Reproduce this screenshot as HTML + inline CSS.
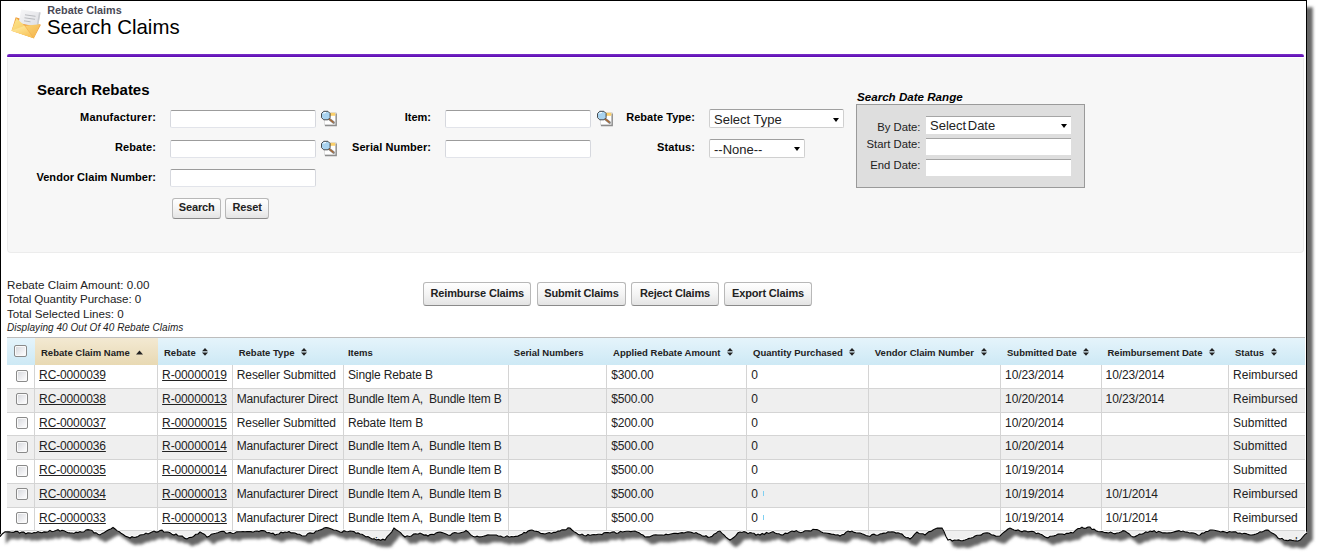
<!DOCTYPE html>
<html><head><meta charset="utf-8">
<style>
*{box-sizing:border-box}
html,body{margin:0;padding:0;width:1321px;height:558px;overflow:hidden;background:#fff;font-family:"Liberation Sans",sans-serif;color:#000}
.a{position:absolute;white-space:nowrap}
.lbl{font-size:11px;font-weight:bold;color:#000;text-align:right;line-height:13px}
.inp{position:absolute;background:#fff;border:1px solid #d6d8de;border-top-color:#9c9c9c;border-bottom-color:#e2e4ea;border-radius:2px}
.sel{position:absolute;background:#fff;border:1px solid #d0d0d0;border-top-color:#a0a0a0;border-radius:2px;color:#222}
.arr{position:absolute;width:0;height:0;border-left:3.5px solid transparent;border-right:3.5px solid transparent;border-top:4px solid #000}
.btn{position:absolute;height:21px;border:1px solid #b8b8b8;border-bottom-color:#8a8a8a;border-radius:3px;background:linear-gradient(#fff,#f4f4f4 50%,#e4e4e4);font-size:11px;font-weight:bold;color:#222;text-align:center;line-height:18px;letter-spacing:-0.15px}
.cb{position:absolute;width:12.5px;height:12px;border:1px solid #8a8a8a;border-radius:2px;background:linear-gradient(135deg,#d4d6db,#f4f4f6 70%,#fff);box-shadow:inset 0 0 0 1px #fafafa}
.th{font-size:9.5px;font-weight:bold;color:#222;line-height:12px;letter-spacing:0px}
.si{position:relative;margin-left:6.5px;top:-1px}
.si2{position:relative;margin-left:6.5px;top:0px}
.sup{display:inline-block;margin-left:7px;width:0;height:0;border-left:4px solid transparent;border-right:4px solid transparent;border-bottom:5px solid #222;vertical-align:1px}
.sboth{display:inline-block;margin-left:7px;width:8px;height:9px;vertical-align:-1px;background:linear-gradient(#222,#222) no-repeat;position:relative}
.td{font-size:12px;color:#222;line-height:14px;letter-spacing:-0.13px}
.lnk{text-decoration:underline}

</style></head><body>
<svg class="a" style="left:0;top:0" width="1321" height="558" viewBox="0 0 1321 558">
<defs><filter id="sh" x="-2%" y="-2%" width="104%" height="104%"><feGaussianBlur stdDeviation="1.5"/></filter></defs>
<path d="M0.0 0.0 L1307.0 0.0 L1307.0 533.0 L1304.8 534.6 L1302.5 537.4 L1300.2 540.0 L1298.0 541.0 L1296.0 541.0 L1294.0 540.7 L1292.0 540.4 L1290.0 539.9 L1288.0 540.8 L1286.0 540.4 L1284.0 540.1 L1282.0 538.3 L1280.0 539.0 L1278.0 538.1 L1276.0 535.5 L1274.0 533.9 L1272.0 533.1 L1270.0 531.6 L1268.0 530.0 L1266.0 530.1 L1264.0 531.1 L1262.0 532.0 L1260.0 531.8 L1258.0 533.2 L1256.0 534.0 L1254.0 534.6 L1252.0 535.0 L1250.0 535.0 L1248.0 534.4 L1246.0 533.6 L1244.0 533.2 L1242.0 533.9 L1240.0 533.0 L1237.9 533.4 L1235.7 531.9 L1233.6 531.8 L1231.4 532.0 L1229.3 531.5 L1227.1 532.8 L1225.0 532.0 L1222.9 531.4 L1220.7 532.0 L1218.6 531.2 L1216.4 530.7 L1214.3 530.2 L1212.1 530.0 L1210.0 530.0 L1208.0 531.5 L1206.0 531.5 L1204.0 533.0 L1202.0 533.1 L1200.0 535.0 L1197.9 535.2 L1195.8 533.8 L1193.6 533.0 L1191.5 532.7 L1189.4 533.0 L1187.2 532.1 L1185.1 532.0 L1183.0 531.0 L1181.0 531.7 L1179.0 530.6 L1177.0 531.1 L1175.0 531.6 L1173.0 532.2 L1171.0 532.8 L1169.0 532.9 L1167.0 533.0 L1164.9 532.9 L1162.8 532.9 L1160.6 531.9 L1158.5 531.3 L1156.4 532.6 L1154.2 530.7 L1152.1 531.6 L1150.0 531.0 L1147.9 532.5 L1145.8 531.9 L1143.6 533.5 L1141.5 534.3 L1139.4 534.1 L1137.2 535.6 L1135.1 536.6 L1133.0 537.0 L1131.0 535.9 L1129.0 533.7 L1127.0 532.5 L1125.0 531.0 L1123.0 530.7 L1121.0 532.1 L1119.0 532.8 L1117.0 533.0 L1114.9 533.8 L1112.8 533.2 L1110.6 532.1 L1108.5 533.0 L1106.4 532.6 L1104.2 532.5 L1102.1 531.5 L1100.0 531.8 L1098.0 531.5 L1096.0 530.7 L1094.0 529.1 L1092.0 529.5 L1090.0 527.0 L1088.0 527.0 L1086.0 528.1 L1084.0 528.4 L1082.0 527.1 L1080.0 528.5 L1078.0 528.5 L1075.5 530.3 L1073.0 533.0 L1070.8 532.4 L1068.7 533.4 L1066.5 533.3 L1064.3 534.6 L1062.2 534.0 L1060.0 534.0 L1058.0 534.1 L1056.0 535.3 L1054.0 535.9 L1052.0 536.3 L1050.0 536.3 L1048.0 538.0 L1046.0 537.4 L1044.0 536.2 L1042.0 534.7 L1040.0 534.0 L1038.0 533.1 L1036.0 533.7 L1034.0 531.7 L1032.0 531.2 L1030.0 531.5 L1028.0 531.9 L1026.0 531.1 L1024.0 530.8 L1022.0 531.8 L1020.0 531.0 L1018.0 529.9 L1016.0 530.6 L1014.0 529.9 L1012.0 529.0 L1010.0 528.0 L1008.0 529.0 L1006.0 530.7 L1004.0 532.2 L1002.0 533.9 L1000.0 536.0 L997.9 536.3 L995.7 536.1 L993.6 535.1 L991.4 534.7 L989.3 533.3 L987.1 532.9 L985.0 533.0 L983.0 533.5 L981.0 535.1 L979.0 535.3 L977.0 535.2 L975.0 536.0 L973.0 537.5 L971.0 538.0 L969.0 538.4 L967.0 539.3 L965.0 540.0 L962.9 540.6 L960.8 540.7 L958.6 539.9 L956.5 540.2 L954.4 540.0 L952.2 541.0 L950.1 539.3 L948.0 540.0 L946.0 536.5 L944.0 531.6 L942.0 528.0 L939.7 528.1 L937.3 528.0 L935.0 529.0 L933.0 530.0 L931.0 531.4 L929.0 531.6 L927.0 533.2 L925.0 535.0 L923.0 533.8 L921.0 533.7 L919.0 533.5 L917.0 532.0 L914.7 534.2 L912.3 537.1 L910.0 539.0 L908.0 537.5 L906.0 537.7 L904.0 536.1 L902.0 534.1 L900.0 533.5 L898.0 532.8 L896.0 533.1 L894.0 532.0 L892.0 531.8 L890.0 532.0 L888.0 531.8 L886.0 533.2 L884.0 533.1 L882.0 533.6 L880.0 534.0 L878.0 535.2 L876.0 535.2 L874.0 534.2 L872.0 534.6 L870.0 536.5 L868.0 536.0 L866.0 535.5 L864.0 534.5 L862.0 533.8 L860.0 533.0 L858.0 533.0 L856.0 532.8 L854.0 532.4 L852.0 531.0 L850.0 531.8 L848.0 531.0 L846.0 532.1 L844.0 534.4 L842.0 534.8 L840.0 536.0 L837.9 534.7 L835.7 535.0 L833.6 534.4 L831.4 534.1 L829.3 533.6 L827.1 533.2 L825.0 533.0 L823.0 532.8 L821.0 531.8 L819.0 530.4 L817.0 529.6 L815.0 529.5 L813.0 529.4 L811.0 531.0 L809.0 530.9 L807.0 530.8 L805.0 530.7 L803.0 532.0 L800.8 532.7 L798.6 532.1 L796.4 530.6 L794.2 531.6 L792.0 531.0 L789.8 532.0 L787.5 533.5 L785.2 533.1 L783.0 535.0 L781.0 534.9 L779.0 533.8 L777.0 533.8 L775.0 532.9 L773.0 531.5 L770.8 532.4 L768.7 533.4 L766.5 532.5 L764.3 534.5 L762.2 533.5 L760.0 535.0 L758.0 534.1 L756.0 535.2 L754.0 533.3 L752.0 533.0 L750.0 532.6 L748.0 533.7 L746.0 532.2 L744.0 531.6 L742.0 532.5 L740.0 532.0 L738.0 532.8 L736.0 535.3 L734.0 537.3 L732.0 538.7 L730.0 540.0 L728.0 538.8 L726.0 537.2 L724.0 534.9 L722.0 533.4 L720.0 531.0 L718.0 531.4 L716.0 533.3 L714.0 534.1 L712.0 536.4 L710.0 537.0 L708.0 537.3 L706.0 535.7 L704.0 536.4 L702.0 535.8 L700.0 534.4 L698.0 533.8 L696.0 532.6 L694.0 533.4 L692.0 532.6 L690.0 532.0 L688.0 531.7 L686.0 532.3 L684.0 533.0 L682.0 532.6 L680.0 533.0 L678.0 533.6 L676.0 533.4 L674.0 533.3 L672.0 533.7 L670.0 534.2 L668.0 534.8 L666.0 534.2 L664.0 535.2 L662.0 535.0 L660.0 535.0 L657.9 535.0 L655.7 534.9 L653.6 535.0 L651.4 535.9 L649.3 536.9 L647.1 536.8 L645.0 537.0 L643.0 535.0 L641.0 534.3 L639.0 532.8 L637.0 531.9 L635.0 531.0 L632.9 531.3 L630.8 531.6 L628.8 531.2 L626.7 531.3 L624.6 531.5 L622.5 532.0 L620.4 531.3 L618.3 533.0 L616.2 533.4 L614.2 531.8 L612.1 532.1 L610.0 533.0 L608.0 532.5 L606.0 532.6 L604.0 532.8 L602.0 534.6 L600.0 534.2 L598.0 534.3 L596.0 534.8 L594.0 534.5 L592.0 534.8 L590.0 535.5 L588.0 534.5 L586.0 536.0 L584.0 535.5 L582.0 534.1 L580.0 535.0 L578.0 534.2 L576.0 532.8 L574.0 531.6 L572.0 530.0 L570.0 528.0 L568.0 527.9 L566.0 529.8 L564.0 529.9 L562.0 529.8 L560.0 531.0 L557.9 531.1 L555.7 532.4 L553.6 532.2 L551.4 533.4 L549.3 532.6 L547.1 533.3 L545.0 534.0 L542.8 533.6 L540.7 533.5 L538.5 531.8 L536.3 531.4 L534.2 531.0 L532.0 530.0 L530.0 530.4 L528.0 531.0 L526.0 533.0 L524.0 532.4 L522.0 534.3 L520.0 535.0 L517.9 536.1 L515.7 536.4 L513.6 536.7 L511.4 536.5 L509.3 537.2 L507.1 535.8 L505.0 537.0 L502.9 537.3 L500.7 536.0 L498.6 536.3 L496.4 535.0 L494.3 535.0 L492.1 535.0 L490.0 535.0 L487.9 534.9 L485.7 535.6 L483.6 536.2 L481.4 536.8 L479.3 536.9 L477.1 536.2 L475.0 537.0 L472.8 536.2 L470.5 534.7 L468.2 532.0 L466.0 530.5 L463.8 532.1 L461.5 532.5 L459.2 533.3 L457.0 533.0 L454.8 532.5 L452.5 533.3 L450.2 535.3 L448.0 535.0 L446.0 534.1 L444.0 533.3 L442.0 532.6 L440.0 532.0 L438.0 532.4 L436.0 532.9 L434.0 534.6 L432.0 534.3 L430.0 534.6 L428.0 536.0 L426.0 534.9 L424.0 535.1 L422.0 534.0 L420.0 533.0 L417.9 534.2 L415.7 533.7 L413.6 534.1 L411.4 536.0 L409.3 536.5 L407.1 535.8 L405.0 537.0 L402.8 535.3 L400.6 532.6 L398.4 531.1 L396.2 529.7 L394.0 528.0 L391.8 531.8 L389.5 534.3 L387.2 536.7 L385.0 540.0 L382.8 539.2 L380.7 540.4 L378.5 539.4 L376.3 540.0 L374.2 538.8 L372.0 539.0 L370.0 537.8 L368.0 536.5 L366.0 536.9 L364.0 535.5 L362.0 534.2 L360.0 534.0 L358.0 532.9 L356.0 533.4 L354.0 531.6 L352.0 531.2 L350.0 531.0 L348.0 531.7 L346.0 531.5 L344.0 530.7 L342.0 532.3 L340.0 532.0 L338.0 531.1 L336.0 530.3 L334.0 530.3 L332.0 529.2 L330.0 528.4 L328.0 527.9 L326.0 527.5 L324.0 528.0 L322.0 529.4 L320.0 530.0 L318.0 530.7 L316.0 531.0 L314.0 533.2 L312.0 533.4 L310.0 532.9 L308.0 533.5 L306.0 535.7 L304.0 536.0 L301.8 535.7 L299.5 534.2 L297.2 534.1 L295.0 533.0 L293.0 532.7 L291.0 532.9 L289.0 531.5 L287.0 532.5 L285.0 532.0 L283.0 532.8 L281.0 532.2 L279.0 534.0 L277.0 534.2 L275.0 535.0 L273.0 533.2 L271.0 533.5 L269.0 532.6 L267.0 532.8 L265.0 531.0 L263.0 530.6 L261.0 530.6 L259.0 531.6 L257.0 531.0 L255.0 531.2 L253.0 532.2 L251.0 531.6 L249.0 531.5 L247.0 531.6 L245.0 531.7 L243.0 531.5 L240.9 531.8 L238.7 531.8 L236.6 531.9 L234.4 533.2 L232.3 533.5 L230.1 532.4 L228.0 533.0 L226.0 533.4 L224.0 531.4 L222.0 531.3 L220.0 531.7 L217.8 532.8 L215.7 533.3 L213.5 533.7 L211.3 534.3 L209.2 536.3 L207.0 537.0 L204.7 534.5 L202.3 533.3 L200.0 532.0 L197.8 534.2 L195.7 534.3 L193.5 536.5 L191.3 537.4 L189.2 537.5 L187.0 539.0 L184.7 538.4 L182.3 536.1 L180.0 536.0 L178.0 535.7 L176.0 534.0 L174.0 535.1 L172.0 534.3 L170.0 532.8 L168.0 532.0 L166.0 532.0 L164.0 532.2 L162.0 530.2 L160.0 530.5 L158.0 531.9 L156.0 532.1 L154.0 531.0 L152.0 531.9 L150.0 532.9 L148.0 533.9 L146.0 533.1 L144.0 534.5 L142.0 534.7 L140.0 535.0 L138.0 536.4 L136.0 537.1 L134.0 537.5 L132.0 536.7 L130.0 538.0 L127.9 537.0 L125.8 536.4 L123.6 534.8 L121.5 533.6 L119.4 531.8 L117.2 530.9 L115.1 529.0 L113.0 527.5 L110.8 528.9 L108.7 529.7 L106.5 531.0 L104.3 532.5 L102.2 533.4 L100.0 535.0 L98.0 534.3 L96.0 532.9 L94.0 532.9 L92.0 530.4 L90.0 530.0 L88.0 529.6 L86.0 529.9 L84.0 531.8 L82.0 532.2 L80.0 531.6 L78.0 532.6 L76.0 532.1 L74.0 533.5 L72.0 533.0 L70.0 532.9 L68.0 532.7 L66.0 531.8 L64.0 530.8 L62.0 530.3 L60.0 531.2 L58.0 529.7 L56.0 530.4 L54.0 531.2 L52.0 531.7 L50.0 530.4 L48.0 531.8 L46.0 532.1 L44.0 531.9 L42.0 532.7 L40.0 532.4 L38.0 531.6 L36.0 532.8 L34.0 532.6 L32.0 533.5 L30.0 533.0 L27.9 532.8 L25.8 533.8 L23.8 532.1 L21.7 532.1 L19.6 533.1 L17.5 531.4 L15.4 531.4 L13.3 532.4 L11.2 532.2 L9.2 531.7 L7.1 531.9 L5.0 531.7 L2.5 533.7 L0.0 536.7Z" fill="#666" transform="translate(5.8,7.2)" filter="url(#sh)"/>
</svg>
<div id="page" style="position:absolute;left:0;top:0;width:1321px;height:558px;background:#fff;clip-path:polygon(0.0px 0.0px,1307.0px 0.0px,1307.0px 533.0px,1304.8px 534.6px,1302.5px 537.4px,1300.2px 540.0px,1298.0px 541.0px,1296.0px 541.0px,1294.0px 540.7px,1292.0px 540.4px,1290.0px 539.9px,1288.0px 540.8px,1286.0px 540.4px,1284.0px 540.1px,1282.0px 538.3px,1280.0px 539.0px,1278.0px 538.1px,1276.0px 535.5px,1274.0px 533.9px,1272.0px 533.1px,1270.0px 531.6px,1268.0px 530.0px,1266.0px 530.1px,1264.0px 531.1px,1262.0px 532.0px,1260.0px 531.8px,1258.0px 533.2px,1256.0px 534.0px,1254.0px 534.6px,1252.0px 535.0px,1250.0px 535.0px,1248.0px 534.4px,1246.0px 533.6px,1244.0px 533.2px,1242.0px 533.9px,1240.0px 533.0px,1237.9px 533.4px,1235.7px 531.9px,1233.6px 531.8px,1231.4px 532.0px,1229.3px 531.5px,1227.1px 532.8px,1225.0px 532.0px,1222.9px 531.4px,1220.7px 532.0px,1218.6px 531.2px,1216.4px 530.7px,1214.3px 530.2px,1212.1px 530.0px,1210.0px 530.0px,1208.0px 531.5px,1206.0px 531.5px,1204.0px 533.0px,1202.0px 533.1px,1200.0px 535.0px,1197.9px 535.2px,1195.8px 533.8px,1193.6px 533.0px,1191.5px 532.7px,1189.4px 533.0px,1187.2px 532.1px,1185.1px 532.0px,1183.0px 531.0px,1181.0px 531.7px,1179.0px 530.6px,1177.0px 531.1px,1175.0px 531.6px,1173.0px 532.2px,1171.0px 532.8px,1169.0px 532.9px,1167.0px 533.0px,1164.9px 532.9px,1162.8px 532.9px,1160.6px 531.9px,1158.5px 531.3px,1156.4px 532.6px,1154.2px 530.7px,1152.1px 531.6px,1150.0px 531.0px,1147.9px 532.5px,1145.8px 531.9px,1143.6px 533.5px,1141.5px 534.3px,1139.4px 534.1px,1137.2px 535.6px,1135.1px 536.6px,1133.0px 537.0px,1131.0px 535.9px,1129.0px 533.7px,1127.0px 532.5px,1125.0px 531.0px,1123.0px 530.7px,1121.0px 532.1px,1119.0px 532.8px,1117.0px 533.0px,1114.9px 533.8px,1112.8px 533.2px,1110.6px 532.1px,1108.5px 533.0px,1106.4px 532.6px,1104.2px 532.5px,1102.1px 531.5px,1100.0px 531.8px,1098.0px 531.5px,1096.0px 530.7px,1094.0px 529.1px,1092.0px 529.5px,1090.0px 527.0px,1088.0px 527.0px,1086.0px 528.1px,1084.0px 528.4px,1082.0px 527.1px,1080.0px 528.5px,1078.0px 528.5px,1075.5px 530.3px,1073.0px 533.0px,1070.8px 532.4px,1068.7px 533.4px,1066.5px 533.3px,1064.3px 534.6px,1062.2px 534.0px,1060.0px 534.0px,1058.0px 534.1px,1056.0px 535.3px,1054.0px 535.9px,1052.0px 536.3px,1050.0px 536.3px,1048.0px 538.0px,1046.0px 537.4px,1044.0px 536.2px,1042.0px 534.7px,1040.0px 534.0px,1038.0px 533.1px,1036.0px 533.7px,1034.0px 531.7px,1032.0px 531.2px,1030.0px 531.5px,1028.0px 531.9px,1026.0px 531.1px,1024.0px 530.8px,1022.0px 531.8px,1020.0px 531.0px,1018.0px 529.9px,1016.0px 530.6px,1014.0px 529.9px,1012.0px 529.0px,1010.0px 528.0px,1008.0px 529.0px,1006.0px 530.7px,1004.0px 532.2px,1002.0px 533.9px,1000.0px 536.0px,997.9px 536.3px,995.7px 536.1px,993.6px 535.1px,991.4px 534.7px,989.3px 533.3px,987.1px 532.9px,985.0px 533.0px,983.0px 533.5px,981.0px 535.1px,979.0px 535.3px,977.0px 535.2px,975.0px 536.0px,973.0px 537.5px,971.0px 538.0px,969.0px 538.4px,967.0px 539.3px,965.0px 540.0px,962.9px 540.6px,960.8px 540.7px,958.6px 539.9px,956.5px 540.2px,954.4px 540.0px,952.2px 541.0px,950.1px 539.3px,948.0px 540.0px,946.0px 536.5px,944.0px 531.6px,942.0px 528.0px,939.7px 528.1px,937.3px 528.0px,935.0px 529.0px,933.0px 530.0px,931.0px 531.4px,929.0px 531.6px,927.0px 533.2px,925.0px 535.0px,923.0px 533.8px,921.0px 533.7px,919.0px 533.5px,917.0px 532.0px,914.7px 534.2px,912.3px 537.1px,910.0px 539.0px,908.0px 537.5px,906.0px 537.7px,904.0px 536.1px,902.0px 534.1px,900.0px 533.5px,898.0px 532.8px,896.0px 533.1px,894.0px 532.0px,892.0px 531.8px,890.0px 532.0px,888.0px 531.8px,886.0px 533.2px,884.0px 533.1px,882.0px 533.6px,880.0px 534.0px,878.0px 535.2px,876.0px 535.2px,874.0px 534.2px,872.0px 534.6px,870.0px 536.5px,868.0px 536.0px,866.0px 535.5px,864.0px 534.5px,862.0px 533.8px,860.0px 533.0px,858.0px 533.0px,856.0px 532.8px,854.0px 532.4px,852.0px 531.0px,850.0px 531.8px,848.0px 531.0px,846.0px 532.1px,844.0px 534.4px,842.0px 534.8px,840.0px 536.0px,837.9px 534.7px,835.7px 535.0px,833.6px 534.4px,831.4px 534.1px,829.3px 533.6px,827.1px 533.2px,825.0px 533.0px,823.0px 532.8px,821.0px 531.8px,819.0px 530.4px,817.0px 529.6px,815.0px 529.5px,813.0px 529.4px,811.0px 531.0px,809.0px 530.9px,807.0px 530.8px,805.0px 530.7px,803.0px 532.0px,800.8px 532.7px,798.6px 532.1px,796.4px 530.6px,794.2px 531.6px,792.0px 531.0px,789.8px 532.0px,787.5px 533.5px,785.2px 533.1px,783.0px 535.0px,781.0px 534.9px,779.0px 533.8px,777.0px 533.8px,775.0px 532.9px,773.0px 531.5px,770.8px 532.4px,768.7px 533.4px,766.5px 532.5px,764.3px 534.5px,762.2px 533.5px,760.0px 535.0px,758.0px 534.1px,756.0px 535.2px,754.0px 533.3px,752.0px 533.0px,750.0px 532.6px,748.0px 533.7px,746.0px 532.2px,744.0px 531.6px,742.0px 532.5px,740.0px 532.0px,738.0px 532.8px,736.0px 535.3px,734.0px 537.3px,732.0px 538.7px,730.0px 540.0px,728.0px 538.8px,726.0px 537.2px,724.0px 534.9px,722.0px 533.4px,720.0px 531.0px,718.0px 531.4px,716.0px 533.3px,714.0px 534.1px,712.0px 536.4px,710.0px 537.0px,708.0px 537.3px,706.0px 535.7px,704.0px 536.4px,702.0px 535.8px,700.0px 534.4px,698.0px 533.8px,696.0px 532.6px,694.0px 533.4px,692.0px 532.6px,690.0px 532.0px,688.0px 531.7px,686.0px 532.3px,684.0px 533.0px,682.0px 532.6px,680.0px 533.0px,678.0px 533.6px,676.0px 533.4px,674.0px 533.3px,672.0px 533.7px,670.0px 534.2px,668.0px 534.8px,666.0px 534.2px,664.0px 535.2px,662.0px 535.0px,660.0px 535.0px,657.9px 535.0px,655.7px 534.9px,653.6px 535.0px,651.4px 535.9px,649.3px 536.9px,647.1px 536.8px,645.0px 537.0px,643.0px 535.0px,641.0px 534.3px,639.0px 532.8px,637.0px 531.9px,635.0px 531.0px,632.9px 531.3px,630.8px 531.6px,628.8px 531.2px,626.7px 531.3px,624.6px 531.5px,622.5px 532.0px,620.4px 531.3px,618.3px 533.0px,616.2px 533.4px,614.2px 531.8px,612.1px 532.1px,610.0px 533.0px,608.0px 532.5px,606.0px 532.6px,604.0px 532.8px,602.0px 534.6px,600.0px 534.2px,598.0px 534.3px,596.0px 534.8px,594.0px 534.5px,592.0px 534.8px,590.0px 535.5px,588.0px 534.5px,586.0px 536.0px,584.0px 535.5px,582.0px 534.1px,580.0px 535.0px,578.0px 534.2px,576.0px 532.8px,574.0px 531.6px,572.0px 530.0px,570.0px 528.0px,568.0px 527.9px,566.0px 529.8px,564.0px 529.9px,562.0px 529.8px,560.0px 531.0px,557.9px 531.1px,555.7px 532.4px,553.6px 532.2px,551.4px 533.4px,549.3px 532.6px,547.1px 533.3px,545.0px 534.0px,542.8px 533.6px,540.7px 533.5px,538.5px 531.8px,536.3px 531.4px,534.2px 531.0px,532.0px 530.0px,530.0px 530.4px,528.0px 531.0px,526.0px 533.0px,524.0px 532.4px,522.0px 534.3px,520.0px 535.0px,517.9px 536.1px,515.7px 536.4px,513.6px 536.7px,511.4px 536.5px,509.3px 537.2px,507.1px 535.8px,505.0px 537.0px,502.9px 537.3px,500.7px 536.0px,498.6px 536.3px,496.4px 535.0px,494.3px 535.0px,492.1px 535.0px,490.0px 535.0px,487.9px 534.9px,485.7px 535.6px,483.6px 536.2px,481.4px 536.8px,479.3px 536.9px,477.1px 536.2px,475.0px 537.0px,472.8px 536.2px,470.5px 534.7px,468.2px 532.0px,466.0px 530.5px,463.8px 532.1px,461.5px 532.5px,459.2px 533.3px,457.0px 533.0px,454.8px 532.5px,452.5px 533.3px,450.2px 535.3px,448.0px 535.0px,446.0px 534.1px,444.0px 533.3px,442.0px 532.6px,440.0px 532.0px,438.0px 532.4px,436.0px 532.9px,434.0px 534.6px,432.0px 534.3px,430.0px 534.6px,428.0px 536.0px,426.0px 534.9px,424.0px 535.1px,422.0px 534.0px,420.0px 533.0px,417.9px 534.2px,415.7px 533.7px,413.6px 534.1px,411.4px 536.0px,409.3px 536.5px,407.1px 535.8px,405.0px 537.0px,402.8px 535.3px,400.6px 532.6px,398.4px 531.1px,396.2px 529.7px,394.0px 528.0px,391.8px 531.8px,389.5px 534.3px,387.2px 536.7px,385.0px 540.0px,382.8px 539.2px,380.7px 540.4px,378.5px 539.4px,376.3px 540.0px,374.2px 538.8px,372.0px 539.0px,370.0px 537.8px,368.0px 536.5px,366.0px 536.9px,364.0px 535.5px,362.0px 534.2px,360.0px 534.0px,358.0px 532.9px,356.0px 533.4px,354.0px 531.6px,352.0px 531.2px,350.0px 531.0px,348.0px 531.7px,346.0px 531.5px,344.0px 530.7px,342.0px 532.3px,340.0px 532.0px,338.0px 531.1px,336.0px 530.3px,334.0px 530.3px,332.0px 529.2px,330.0px 528.4px,328.0px 527.9px,326.0px 527.5px,324.0px 528.0px,322.0px 529.4px,320.0px 530.0px,318.0px 530.7px,316.0px 531.0px,314.0px 533.2px,312.0px 533.4px,310.0px 532.9px,308.0px 533.5px,306.0px 535.7px,304.0px 536.0px,301.8px 535.7px,299.5px 534.2px,297.2px 534.1px,295.0px 533.0px,293.0px 532.7px,291.0px 532.9px,289.0px 531.5px,287.0px 532.5px,285.0px 532.0px,283.0px 532.8px,281.0px 532.2px,279.0px 534.0px,277.0px 534.2px,275.0px 535.0px,273.0px 533.2px,271.0px 533.5px,269.0px 532.6px,267.0px 532.8px,265.0px 531.0px,263.0px 530.6px,261.0px 530.6px,259.0px 531.6px,257.0px 531.0px,255.0px 531.2px,253.0px 532.2px,251.0px 531.6px,249.0px 531.5px,247.0px 531.6px,245.0px 531.7px,243.0px 531.5px,240.9px 531.8px,238.7px 531.8px,236.6px 531.9px,234.4px 533.2px,232.3px 533.5px,230.1px 532.4px,228.0px 533.0px,226.0px 533.4px,224.0px 531.4px,222.0px 531.3px,220.0px 531.7px,217.8px 532.8px,215.7px 533.3px,213.5px 533.7px,211.3px 534.3px,209.2px 536.3px,207.0px 537.0px,204.7px 534.5px,202.3px 533.3px,200.0px 532.0px,197.8px 534.2px,195.7px 534.3px,193.5px 536.5px,191.3px 537.4px,189.2px 537.5px,187.0px 539.0px,184.7px 538.4px,182.3px 536.1px,180.0px 536.0px,178.0px 535.7px,176.0px 534.0px,174.0px 535.1px,172.0px 534.3px,170.0px 532.8px,168.0px 532.0px,166.0px 532.0px,164.0px 532.2px,162.0px 530.2px,160.0px 530.5px,158.0px 531.9px,156.0px 532.1px,154.0px 531.0px,152.0px 531.9px,150.0px 532.9px,148.0px 533.9px,146.0px 533.1px,144.0px 534.5px,142.0px 534.7px,140.0px 535.0px,138.0px 536.4px,136.0px 537.1px,134.0px 537.5px,132.0px 536.7px,130.0px 538.0px,127.9px 537.0px,125.8px 536.4px,123.6px 534.8px,121.5px 533.6px,119.4px 531.8px,117.2px 530.9px,115.1px 529.0px,113.0px 527.5px,110.8px 528.9px,108.7px 529.7px,106.5px 531.0px,104.3px 532.5px,102.2px 533.4px,100.0px 535.0px,98.0px 534.3px,96.0px 532.9px,94.0px 532.9px,92.0px 530.4px,90.0px 530.0px,88.0px 529.6px,86.0px 529.9px,84.0px 531.8px,82.0px 532.2px,80.0px 531.6px,78.0px 532.6px,76.0px 532.1px,74.0px 533.5px,72.0px 533.0px,70.0px 532.9px,68.0px 532.7px,66.0px 531.8px,64.0px 530.8px,62.0px 530.3px,60.0px 531.2px,58.0px 529.7px,56.0px 530.4px,54.0px 531.2px,52.0px 531.7px,50.0px 530.4px,48.0px 531.8px,46.0px 532.1px,44.0px 531.9px,42.0px 532.7px,40.0px 532.4px,38.0px 531.6px,36.0px 532.8px,34.0px 532.6px,32.0px 533.5px,30.0px 533.0px,27.9px 532.8px,25.8px 533.8px,23.8px 532.1px,21.7px 532.1px,19.6px 533.1px,17.5px 531.4px,15.4px 531.4px,13.3px 532.4px,11.2px 532.2px,9.2px 531.7px,7.1px 531.9px,5.0px 531.7px,2.5px 533.7px,0.0px 536.7px)">
<svg class="a" style="left:8px;top:6px" width="36" height="36" viewBox="8 6 36 36">
<defs>
<linearGradient id="env" x1="0" y1="0" x2="1" y2="1"><stop offset="0" stop-color="#fde88e"/><stop offset="1" stop-color="#f4b24a"/></linearGradient>
<linearGradient id="env2" x1="0" y1="0" x2="0.6" y2="1"><stop offset="0" stop-color="#fff0a8"/><stop offset="1" stop-color="#f8c35a"/></linearGradient>
<linearGradient id="pap" x1="0" y1="0" x2="1" y2="1"><stop offset="0" stop-color="#f7f7f8"/><stop offset="1" stop-color="#dcdde2"/></linearGradient>
<filter id="ib"><feGaussianBlur stdDeviation="0.35"/></filter>
</defs>
<g filter="url(#ib)">
<path d="M11.5 30.8 L15.7 17.3 L40.9 24.7 L33.8 38.3 Z" fill="#ee9d3c"/>
<path d="M21.2 9.5 L40.6 12.5 L38 27 L18.6 23 Z" fill="url(#pap)"/>
<path d="M40.6 12.5 L38 27 L36.5 26.5 L39 12.3Z" fill="#c9cbcf"/>
<path d="M25 14.8 L35.5 16.3 M24.5 17.8 L35 19.3 M24 20.8 L30.5 21.8" stroke="#a4a6ab" stroke-width="0.7"/>
<path d="M11.5 30.8 L16.4 18.3 L24.8 25.7 L40.2 24.2 L33.8 38.3 Z" fill="url(#env)"/>
<path d="M11.5 30.8 L24.8 25.7 L33.8 38.3 Z" fill="url(#env2)"/>
<path d="M24.8 25.7 L33.8 38.3" stroke="#f1a94a" stroke-width="0.6"/>
</g>
</svg>
<div class="a" style="left:47.3px;top:3.8px;font-size:10.8px;font-weight:bold;color:#4a4a56">Rebate Claims</div>
<div class="a" style="left:47px;top:15.9px;font-size:20.4px;color:#000">Search Claims</div>
<div class="a" style="left:7.2px;top:54px;width:1297px;height:3.2px;background:linear-gradient(#7b30c9,#5a08b0);border-radius:3px 3px 1px 1px"></div>
<div class="a" style="left:7.2px;top:58px;width:1297px;height:194.6px;background:#f7f7f7;border:1px solid #ececec;border-top:none;border-radius:0 0 4px 4px"></div>
<div class="a" style="left:37px;top:80.6px;font-size:15px;font-weight:bold">Search Rebates</div>
<div class="a lbl" style="right:1165px;top:111px;letter-spacing:0.2px">Manufacturer:</div>
<div class="a lbl" style="right:1165px;top:141.2px;letter-spacing:0.1px">Rebate:</div>
<div class="a lbl" style="right:1165px;top:171.4px;letter-spacing:0.05px">Vendor Claim Number:</div>
<div class="inp" style="left:170px;top:110px;width:146px;height:18px"></div>
<div class="inp" style="left:170px;top:140px;width:146px;height:18px"></div>
<div class="inp" style="left:170px;top:169px;width:146px;height:18px"></div>
<svg class="a" style="left:316px;top:106px" width="26" height="24" viewBox="316 106 26 24">
<rect x="324.5" y="112.5" width="11.5" height="12.5" fill="#fff" stroke="#d8d8d8" stroke-width="0.8"/>
<path d="M336.2 113.5 V125.5 H325" fill="none" stroke="#8d8d8d" stroke-width="1.4"/>
<rect x="329.5" y="112.8" width="5.8" height="3" fill="#fcd06a"/>
<path d="M328.3 118.3 L333.6 122.6" stroke="#8a8a8a" stroke-width="2.6" stroke-linecap="round"/>
<path d="M328.3 118.3 L333.2 122.2" stroke="#b0662a" stroke-width="1.1" stroke-linecap="round"/>
<path d="M323.7 111.3 H327.9 L330.1 113.5 V117.6 L327.9 119.8 H323.7 L321.5 117.6 V113.5 Z" fill="#a9d3ef" stroke="#3a3a3a" stroke-width="0.9"/>
<path d="M323.5 113.5 Q324.5 112.4 326 112.5" stroke="#fff" stroke-width="1.1" fill="none"/>
</svg>
<svg class="a" style="left:316px;top:136px" width="26" height="24" viewBox="316 106 26 24">
<rect x="324.5" y="112.5" width="11.5" height="12.5" fill="#fff" stroke="#d8d8d8" stroke-width="0.8"/>
<path d="M336.2 113.5 V125.5 H325" fill="none" stroke="#8d8d8d" stroke-width="1.4"/>
<rect x="329.5" y="112.8" width="5.8" height="3" fill="#fcd06a"/>
<path d="M328.3 118.3 L333.6 122.6" stroke="#8a8a8a" stroke-width="2.6" stroke-linecap="round"/>
<path d="M328.3 118.3 L333.2 122.2" stroke="#b0662a" stroke-width="1.1" stroke-linecap="round"/>
<path d="M323.7 111.3 H327.9 L330.1 113.5 V117.6 L327.9 119.8 H323.7 L321.5 117.6 V113.5 Z" fill="#a9d3ef" stroke="#3a3a3a" stroke-width="0.9"/>
<path d="M323.5 113.5 Q324.5 112.4 326 112.5" stroke="#fff" stroke-width="1.1" fill="none"/>
</svg>
<div class="a lbl" style="right:890px;top:111px;letter-spacing:0px">Item:</div>
<div class="a lbl" style="right:890px;top:141.2px;letter-spacing:0.05px">Serial Number:</div>
<div class="inp" style="left:445px;top:110px;width:146px;height:18px"></div>
<div class="inp" style="left:445px;top:140px;width:146px;height:18px"></div>
<svg class="a" style="left:592px;top:106px" width="26" height="24" viewBox="316 106 26 24">
<rect x="324.5" y="112.5" width="11.5" height="12.5" fill="#fff" stroke="#d8d8d8" stroke-width="0.8"/>
<path d="M336.2 113.5 V125.5 H325" fill="none" stroke="#8d8d8d" stroke-width="1.4"/>
<rect x="329.5" y="112.8" width="5.8" height="3" fill="#fcd06a"/>
<path d="M328.3 118.3 L333.6 122.6" stroke="#8a8a8a" stroke-width="2.6" stroke-linecap="round"/>
<path d="M328.3 118.3 L333.2 122.2" stroke="#b0662a" stroke-width="1.1" stroke-linecap="round"/>
<path d="M323.7 111.3 H327.9 L330.1 113.5 V117.6 L327.9 119.8 H323.7 L321.5 117.6 V113.5 Z" fill="#a9d3ef" stroke="#3a3a3a" stroke-width="0.9"/>
<path d="M323.5 113.5 Q324.5 112.4 326 112.5" stroke="#fff" stroke-width="1.1" fill="none"/>
</svg>
<div class="a lbl" style="right:626px;top:111px;letter-spacing:0.05px">Rebate Type:</div>
<div class="a lbl" style="right:626px;top:141.2px;letter-spacing:0.1px">Status:</div>
<div class="sel" style="left:709px;top:109px;width:135px;height:19px"><span class="a" style="left:4px;top:1.5px;font-size:13px;line-height:15px">Select Type</span></div>
<div class="arr" style="left:832.5px;top:118px"></div>
<div class="sel" style="left:709px;top:139px;width:96px;height:19px"><span class="a" style="left:4px;top:1.5px;font-size:13px;line-height:15px">--None--</span></div>
<div class="arr" style="left:793.5px;top:147px"></div>
<div class="btn" style="left:172.2px;top:198px;width:49px;height:20.5px;line-height:17.5px">Search</div>
<div class="btn" style="left:225.3px;top:198px;width:43.5px;height:20.5px;line-height:17.5px">Reset</div>
<div class="a" style="left:857px;top:89.5px;font-size:11.6px;font-weight:bold;font-style:italic">Search Date Range</div>
<div class="a" style="left:856px;top:104px;width:229px;height:84px;background:#dedede;border:1px solid #9a9a9a"></div>
<div class="a" style="right:400.5px;top:121px;font-size:11.3px;color:#222">By Date:</div>
<div class="a" style="right:400.5px;top:138px;font-size:11.3px;color:#222">Start Date:</div>
<div class="a" style="right:400.5px;top:159px;font-size:11.3px;color:#222">End Date:</div>
<div class="a" style="left:926px;top:116px;width:145px;height:18px;background:#fff;border-top:1px solid #a5a5a5"><span class="a" style="left:4px;top:1px;font-size:13px;line-height:15px;color:#222;word-spacing:-2px">Select Date</span></div>
<div class="arr" style="left:1060.5px;top:124px"></div>
<div class="a" style="left:926px;top:138px;width:145px;height:17px;background:#fff;border-top:1px solid #a5a5a5"></div>
<div class="a" style="left:926px;top:159px;width:145px;height:17px;background:#fff;border-top:1px solid #a5a5a5"></div>
<div class="a" style="left:7px;top:278px;font-size:11.6px;line-height:14px;color:#222;letter-spacing:0.03px">Rebate Claim Amount: 0.00</div>
<div class="a" style="left:7px;top:292.3px;font-size:11.6px;line-height:14px;color:#222;letter-spacing:-0.07px">Total Quantity Purchase: 0</div>
<div class="a" style="left:7px;top:306.9px;font-size:11.6px;line-height:14px;color:#222;letter-spacing:0px">Total Selected Lines: 0</div>
<div class="a" style="left:7px;top:322px;font-size:10px;font-style:italic;color:#222;letter-spacing:0.05px">Displaying 40 Out Of 40 Rebate Claims</div>
<div class="btn" style="left:423.3px;top:282px;width:108px;height:23.5px;line-height:21px">Reimburse Claims</div>
<div class="btn" style="left:537px;top:282px;width:89px;height:23.5px;line-height:21px">Submit Claims</div>
<div class="btn" style="left:631px;top:282px;width:88px;height:23.5px;line-height:21px">Reject Claims</div>
<div class="btn" style="left:724px;top:282px;width:88px;height:23.5px;line-height:21px">Export Claims</div>
<div class="a" style="left:7px;top:337px;width:1297.5px;height:1.5px;background:#bdbdbd"></div>
<div class="a" style="left:7px;top:338px;width:1297.5px;height:26.9px;background:linear-gradient(#e5f4fb,#cde9f5)"></div>
<div class="a" style="left:35px;top:338px;width:122.5px;height:26.9px;background:linear-gradient(#f3e9d2,#e8d9b3)"></div>
<div class="cb" style="left:14px;top:345px"></div>
<div class="a th" style="left:41.0px;top:347px">Rebate Claim Name<svg class="si" width="7" height="5" viewBox="0 0 7 5"><path d="M0 4.5 L3.5 0.5 L7 4.5Z" fill="#222"/></svg></div>
<div class="a th" style="left:164.0px;top:347px">Rebate<svg class="si2" width="6" height="8" viewBox="0 0 6 8"><path d="M0 3.2 L3 0 L6 3.2Z M0 4.6 L3 7.8 L6 4.6Z" fill="#222"/></svg></div>
<div class="a th" style="left:238.7px;top:347px">Rebate Type<svg class="si2" width="6" height="8" viewBox="0 0 6 8"><path d="M0 3.2 L3 0 L6 3.2Z M0 4.6 L3 7.8 L6 4.6Z" fill="#222"/></svg></div>
<div class="a th" style="left:347.9px;top:347px">Items</div>
<div class="a th" style="left:513.8px;top:347px">Serial Numbers</div>
<div class="a th" style="left:613.1px;top:347px">Applied Rebate Amount<svg class="si2" width="6" height="8" viewBox="0 0 6 8"><path d="M0 3.2 L3 0 L6 3.2Z M0 4.6 L3 7.8 L6 4.6Z" fill="#222"/></svg></div>
<div class="a th" style="left:753.1px;top:347px">Quantity Purchased<svg class="si2" width="6" height="8" viewBox="0 0 6 8"><path d="M0 3.2 L3 0 L6 3.2Z M0 4.6 L3 7.8 L6 4.6Z" fill="#222"/></svg></div>
<div class="a th" style="left:874.8px;top:347px">Vendor Claim Number<svg class="si2" width="6" height="8" viewBox="0 0 6 8"><path d="M0 3.2 L3 0 L6 3.2Z M0 4.6 L3 7.8 L6 4.6Z" fill="#222"/></svg></div>
<div class="a th" style="left:1007.0px;top:347px">Submitted Date<svg class="si2" width="6" height="8" viewBox="0 0 6 8"><path d="M0 3.2 L3 0 L6 3.2Z M0 4.6 L3 7.8 L6 4.6Z" fill="#222"/></svg></div>
<div class="a th" style="left:1107.5px;top:347px">Reimbursement Date<svg class="si2" width="6" height="8" viewBox="0 0 6 8"><path d="M0 3.2 L3 0 L6 3.2Z M0 4.6 L3 7.8 L6 4.6Z" fill="#222"/></svg></div>
<div class="a th" style="left:1235.0px;top:347px">Status<svg class="si2" width="6" height="8" viewBox="0 0 6 8"><path d="M0 3.2 L3 0 L6 3.2Z M0 4.6 L3 7.8 L6 4.6Z" fill="#222"/></svg></div>
<div class="a" style="left:7px;top:365.0px;width:1297.5px;height:23.76px;background:#fff"></div>
<div class="a" style="left:7px;top:387.76px;width:1297.5px;height:1px;background:#d4d4d4"></div>
<div class="cb" style="left:15.5px;top:369.5px"></div>
<div class="a td lnk" style="left:39.1px;top:368.2px;">RC-0000039</div>
<div class="a td lnk" style="left:162.1px;top:368.2px;">R-00000019</div>
<div class="a td" style="left:236.79999999999998px;top:368.2px;">Reseller Submitted</div>
<div class="a td" style="left:348.0px;top:368.2px;">Single Rebate B</div>
<div class="a td" style="left:512.9px;top:368.2px;"></div>
<div class="a td" style="left:611.2px;top:368.2px;">$300.00</div>
<div class="a td" style="left:751.2px;top:368.2px;">0</div>
<div class="a td" style="left:872.9px;top:368.2px;"></div>
<div class="a td" style="left:1005.1px;top:368.2px;">10/23/2014</div>
<div class="a td" style="left:1105.6px;top:368.2px;">10/23/2014</div>
<div class="a td" style="left:1233.1px;top:368.2px;letter-spacing:0px;">Reimbursed</div>
<div class="a" style="left:7px;top:388.76px;width:1297.5px;height:23.76px;background:#efefef"></div>
<div class="a" style="left:7px;top:411.52px;width:1297.5px;height:1px;background:#d4d4d4"></div>
<div class="cb" style="left:15.5px;top:393.26px"></div>
<div class="a td lnk" style="left:39.1px;top:391.96px;">RC-0000038</div>
<div class="a td lnk" style="left:162.1px;top:391.96px;">R-00000013</div>
<div class="a td" style="left:236.79999999999998px;top:391.96px;letter-spacing:-0.24px;">Manufacturer Direct</div>
<div class="a td" style="left:348.0px;top:391.96px;letter-spacing:-0.23px;">Bundle Item A,&nbsp; Bundle Item B</div>
<div class="a td" style="left:512.9px;top:391.96px;"></div>
<div class="a td" style="left:611.2px;top:391.96px;">$500.00</div>
<div class="a td" style="left:751.2px;top:391.96px;">0</div>
<div class="a td" style="left:872.9px;top:391.96px;"></div>
<div class="a td" style="left:1005.1px;top:391.96px;">10/20/2014</div>
<div class="a td" style="left:1105.6px;top:391.96px;">10/23/2014</div>
<div class="a td" style="left:1233.1px;top:391.96px;letter-spacing:0px;">Reimbursed</div>
<div class="a" style="left:7px;top:412.52px;width:1297.5px;height:23.76px;background:#fff"></div>
<div class="a" style="left:7px;top:435.28px;width:1297.5px;height:1px;background:#d4d4d4"></div>
<div class="cb" style="left:15.5px;top:417.02px"></div>
<div class="a td lnk" style="left:39.1px;top:415.71999999999997px;">RC-0000037</div>
<div class="a td lnk" style="left:162.1px;top:415.71999999999997px;">R-00000015</div>
<div class="a td" style="left:236.79999999999998px;top:415.71999999999997px;">Reseller Submitted</div>
<div class="a td" style="left:348.0px;top:415.71999999999997px;">Rebate Item B</div>
<div class="a td" style="left:512.9px;top:415.71999999999997px;"></div>
<div class="a td" style="left:611.2px;top:415.71999999999997px;">$200.00</div>
<div class="a td" style="left:751.2px;top:415.71999999999997px;">0</div>
<div class="a td" style="left:872.9px;top:415.71999999999997px;"></div>
<div class="a td" style="left:1005.1px;top:415.71999999999997px;">10/20/2014</div>
<div class="a td" style="left:1105.6px;top:415.71999999999997px;"></div>
<div class="a td" style="left:1233.1px;top:415.71999999999997px;letter-spacing:0px;">Submitted</div>
<div class="a" style="left:7px;top:436.28px;width:1297.5px;height:23.76px;background:#efefef"></div>
<div class="a" style="left:7px;top:459.03999999999996px;width:1297.5px;height:1px;background:#d4d4d4"></div>
<div class="cb" style="left:15.5px;top:440.78px"></div>
<div class="a td lnk" style="left:39.1px;top:439.47999999999996px;">RC-0000036</div>
<div class="a td lnk" style="left:162.1px;top:439.47999999999996px;">R-00000014</div>
<div class="a td" style="left:236.79999999999998px;top:439.47999999999996px;letter-spacing:-0.24px;">Manufacturer Direct</div>
<div class="a td" style="left:348.0px;top:439.47999999999996px;letter-spacing:-0.23px;">Bundle Item A,&nbsp; Bundle Item B</div>
<div class="a td" style="left:512.9px;top:439.47999999999996px;"></div>
<div class="a td" style="left:611.2px;top:439.47999999999996px;">$500.00</div>
<div class="a td" style="left:751.2px;top:439.47999999999996px;">0</div>
<div class="a td" style="left:872.9px;top:439.47999999999996px;"></div>
<div class="a td" style="left:1005.1px;top:439.47999999999996px;">10/20/2014</div>
<div class="a td" style="left:1105.6px;top:439.47999999999996px;"></div>
<div class="a td" style="left:1233.1px;top:439.47999999999996px;letter-spacing:0px;">Submitted</div>
<div class="a" style="left:7px;top:460.04px;width:1297.5px;height:23.76px;background:#fff"></div>
<div class="a" style="left:7px;top:482.8px;width:1297.5px;height:1px;background:#d4d4d4"></div>
<div class="cb" style="left:15.5px;top:464.54px"></div>
<div class="a td lnk" style="left:39.1px;top:463.24px;">RC-0000035</div>
<div class="a td lnk" style="left:162.1px;top:463.24px;">R-00000014</div>
<div class="a td" style="left:236.79999999999998px;top:463.24px;letter-spacing:-0.24px;">Manufacturer Direct</div>
<div class="a td" style="left:348.0px;top:463.24px;letter-spacing:-0.23px;">Bundle Item A,&nbsp; Bundle Item B</div>
<div class="a td" style="left:512.9px;top:463.24px;"></div>
<div class="a td" style="left:611.2px;top:463.24px;">$500.00</div>
<div class="a td" style="left:751.2px;top:463.24px;">0</div>
<div class="a td" style="left:872.9px;top:463.24px;"></div>
<div class="a td" style="left:1005.1px;top:463.24px;">10/19/2014</div>
<div class="a td" style="left:1105.6px;top:463.24px;"></div>
<div class="a td" style="left:1233.1px;top:463.24px;letter-spacing:0px;">Submitted</div>
<div class="a" style="left:7px;top:483.8px;width:1297.5px;height:23.76px;background:#efefef"></div>
<div class="a" style="left:7px;top:506.56px;width:1297.5px;height:1px;background:#d4d4d4"></div>
<div class="cb" style="left:15.5px;top:488.3px"></div>
<div class="a td lnk" style="left:39.1px;top:487.0px;">RC-0000034</div>
<div class="a td lnk" style="left:162.1px;top:487.0px;">R-00000013</div>
<div class="a td" style="left:236.79999999999998px;top:487.0px;letter-spacing:-0.24px;">Manufacturer Direct</div>
<div class="a td" style="left:348.0px;top:487.0px;letter-spacing:-0.23px;">Bundle Item A,&nbsp; Bundle Item B</div>
<div class="a td" style="left:512.9px;top:487.0px;"></div>
<div class="a td" style="left:611.2px;top:487.0px;">$500.00</div>
<div class="a td" style="left:751.2px;top:487.0px;">0</div>
<div class="a td" style="left:872.9px;top:487.0px;"></div>
<div class="a td" style="left:1005.1px;top:487.0px;">10/19/2014</div>
<div class="a td" style="left:1105.6px;top:487.0px;">10/1/2014</div>
<div class="a td" style="left:1233.1px;top:487.0px;letter-spacing:0px;">Reimbursed</div>
<div class="a" style="left:7px;top:507.56px;width:1297.5px;height:23.76px;background:#fff"></div>
<div class="a" style="left:7px;top:530.32px;width:1297.5px;height:1px;background:#d4d4d4"></div>
<div class="cb" style="left:15.5px;top:512.06px"></div>
<div class="a td lnk" style="left:39.1px;top:510.76px;">RC-0000033</div>
<div class="a td lnk" style="left:162.1px;top:510.76px;">R-00000013</div>
<div class="a td" style="left:236.79999999999998px;top:510.76px;letter-spacing:-0.24px;">Manufacturer Direct</div>
<div class="a td" style="left:348.0px;top:510.76px;letter-spacing:-0.23px;">Bundle Item A,&nbsp; Bundle Item B</div>
<div class="a td" style="left:512.9px;top:510.76px;"></div>
<div class="a td" style="left:611.2px;top:510.76px;">$500.00</div>
<div class="a td" style="left:751.2px;top:510.76px;">0</div>
<div class="a td" style="left:872.9px;top:510.76px;"></div>
<div class="a td" style="left:1005.1px;top:510.76px;">10/19/2014</div>
<div class="a td" style="left:1105.6px;top:510.76px;">10/1/2014</div>
<div class="a td" style="left:1233.1px;top:510.76px;letter-spacing:0px;">Reimbursed</div>
<div class="a" style="left:7px;top:531.32px;width:1297.5px;height:23.76px;background:#efefef"></div>
<div class="a" style="left:7px;top:554.08px;width:1297.5px;height:1px;background:#d4d4d4"></div>
<div class="cb" style="left:15.5px;top:535.82px"></div>
<div class="a td lnk" style="left:39.1px;top:534.5200000000001px;">RC-0000032</div>
<div class="a td lnk" style="left:162.1px;top:534.5200000000001px;">R-00000013</div>
<div class="a td" style="left:236.79999999999998px;top:534.5200000000001px;letter-spacing:-0.24px;">Manufacturer Direct</div>
<div class="a td" style="left:348.0px;top:534.5200000000001px;letter-spacing:-0.23px;">Bundle Item A,&nbsp; Bundle Item B</div>
<div class="a td" style="left:512.9px;top:534.5200000000001px;"></div>
<div class="a td" style="left:611.2px;top:534.5200000000001px;">$500.00</div>
<div class="a td" style="left:751.2px;top:534.5200000000001px;">0</div>
<div class="a td" style="left:872.9px;top:534.5200000000001px;"></div>
<div class="a td" style="left:1005.1px;top:534.5200000000001px;">10/19/2014</div>
<div class="a td" style="left:1105.6px;top:534.5200000000001px;">10/1/2014</div>
<div class="a td" style="left:1233.1px;top:534.5200000000001px;letter-spacing:0px;">Reimbursed</div>
<div class="a" style="left:763px;top:491.0px;width:1px;height:5px;background:#7fd0f2"></div>
<div class="a" style="left:763px;top:514.76px;width:1px;height:5px;background:#7fd0f2"></div>
<div class="a" style="left:34.0px;top:365.0px;width:1px;height:190.08px;background:#d4d4d4"></div>
<div class="a" style="left:157.0px;top:365.0px;width:1px;height:190.08px;background:#d4d4d4"></div>
<div class="a" style="left:231.7px;top:365.0px;width:1px;height:190.08px;background:#d4d4d4"></div>
<div class="a" style="left:342.9px;top:365.0px;width:1px;height:190.08px;background:#d4d4d4"></div>
<div class="a" style="left:507.8px;top:365.0px;width:1px;height:190.08px;background:#d4d4d4"></div>
<div class="a" style="left:606.1px;top:365.0px;width:1px;height:190.08px;background:#d4d4d4"></div>
<div class="a" style="left:746.1px;top:365.0px;width:1px;height:190.08px;background:#d4d4d4"></div>
<div class="a" style="left:867.8px;top:365.0px;width:1px;height:190.08px;background:#d4d4d4"></div>
<div class="a" style="left:1000.0px;top:365.0px;width:1px;height:190.08px;background:#d4d4d4"></div>
<div class="a" style="left:1100.5px;top:365.0px;width:1px;height:190.08px;background:#d4d4d4"></div>
<div class="a" style="left:1228.0px;top:365.0px;width:1px;height:190.08px;background:#d4d4d4"></div>
<div class="a" style="left:0;top:0;width:1307px;height:1px;background:#000"></div>
<div class="a" style="left:0;top:0;width:1px;height:558px;background:#000"></div>
<div class="a" style="left:1305.5px;top:0;width:1.5px;height:558px;background:#000"></div>
</div>
<svg class="a" style="left:0;top:0" width="1321" height="558" viewBox="0 0 1321 558">
<path d="M0.0 536.7 L2.5 533.7 L5.0 531.7 L7.1 531.9 L9.2 531.7 L11.2 532.2 L13.3 532.4 L15.4 531.4 L17.5 531.4 L19.6 533.1 L21.7 532.1 L23.8 532.1 L25.8 533.8 L27.9 532.8 L30.0 533.0 L32.0 533.5 L34.0 532.6 L36.0 532.8 L38.0 531.6 L40.0 532.4 L42.0 532.7 L44.0 531.9 L46.0 532.1 L48.0 531.8 L50.0 530.4 L52.0 531.7 L54.0 531.2 L56.0 530.4 L58.0 529.7 L60.0 531.2 L62.0 530.3 L64.0 530.8 L66.0 531.8 L68.0 532.7 L70.0 532.9 L72.0 533.0 L74.0 533.5 L76.0 532.1 L78.0 532.6 L80.0 531.6 L82.0 532.2 L84.0 531.8 L86.0 529.9 L88.0 529.6 L90.0 530.0 L92.0 530.4 L94.0 532.9 L96.0 532.9 L98.0 534.3 L100.0 535.0 L102.2 533.4 L104.3 532.5 L106.5 531.0 L108.7 529.7 L110.8 528.9 L113.0 527.5 L115.1 529.0 L117.2 530.9 L119.4 531.8 L121.5 533.6 L123.6 534.8 L125.8 536.4 L127.9 537.0 L130.0 538.0 L132.0 536.7 L134.0 537.5 L136.0 537.1 L138.0 536.4 L140.0 535.0 L142.0 534.7 L144.0 534.5 L146.0 533.1 L148.0 533.9 L150.0 532.9 L152.0 531.9 L154.0 531.0 L156.0 532.1 L158.0 531.9 L160.0 530.5 L162.0 530.2 L164.0 532.2 L166.0 532.0 L168.0 532.0 L170.0 532.8 L172.0 534.3 L174.0 535.1 L176.0 534.0 L178.0 535.7 L180.0 536.0 L182.3 536.1 L184.7 538.4 L187.0 539.0 L189.2 537.5 L191.3 537.4 L193.5 536.5 L195.7 534.3 L197.8 534.2 L200.0 532.0 L202.3 533.3 L204.7 534.5 L207.0 537.0 L209.2 536.3 L211.3 534.3 L213.5 533.7 L215.7 533.3 L217.8 532.8 L220.0 531.7 L222.0 531.3 L224.0 531.4 L226.0 533.4 L228.0 533.0 L230.1 532.4 L232.3 533.5 L234.4 533.2 L236.6 531.9 L238.7 531.8 L240.9 531.8 L243.0 531.5 L245.0 531.7 L247.0 531.6 L249.0 531.5 L251.0 531.6 L253.0 532.2 L255.0 531.2 L257.0 531.0 L259.0 531.6 L261.0 530.6 L263.0 530.6 L265.0 531.0 L267.0 532.8 L269.0 532.6 L271.0 533.5 L273.0 533.2 L275.0 535.0 L277.0 534.2 L279.0 534.0 L281.0 532.2 L283.0 532.8 L285.0 532.0 L287.0 532.5 L289.0 531.5 L291.0 532.9 L293.0 532.7 L295.0 533.0 L297.2 534.1 L299.5 534.2 L301.8 535.7 L304.0 536.0 L306.0 535.7 L308.0 533.5 L310.0 532.9 L312.0 533.4 L314.0 533.2 L316.0 531.0 L318.0 530.7 L320.0 530.0 L322.0 529.4 L324.0 528.0 L326.0 527.5 L328.0 527.9 L330.0 528.4 L332.0 529.2 L334.0 530.3 L336.0 530.3 L338.0 531.1 L340.0 532.0 L342.0 532.3 L344.0 530.7 L346.0 531.5 L348.0 531.7 L350.0 531.0 L352.0 531.2 L354.0 531.6 L356.0 533.4 L358.0 532.9 L360.0 534.0 L362.0 534.2 L364.0 535.5 L366.0 536.9 L368.0 536.5 L370.0 537.8 L372.0 539.0 L374.2 538.8 L376.3 540.0 L378.5 539.4 L380.7 540.4 L382.8 539.2 L385.0 540.0 L387.2 536.7 L389.5 534.3 L391.8 531.8 L394.0 528.0 L396.2 529.7 L398.4 531.1 L400.6 532.6 L402.8 535.3 L405.0 537.0 L407.1 535.8 L409.3 536.5 L411.4 536.0 L413.6 534.1 L415.7 533.7 L417.9 534.2 L420.0 533.0 L422.0 534.0 L424.0 535.1 L426.0 534.9 L428.0 536.0 L430.0 534.6 L432.0 534.3 L434.0 534.6 L436.0 532.9 L438.0 532.4 L440.0 532.0 L442.0 532.6 L444.0 533.3 L446.0 534.1 L448.0 535.0 L450.2 535.3 L452.5 533.3 L454.8 532.5 L457.0 533.0 L459.2 533.3 L461.5 532.5 L463.8 532.1 L466.0 530.5 L468.2 532.0 L470.5 534.7 L472.8 536.2 L475.0 537.0 L477.1 536.2 L479.3 536.9 L481.4 536.8 L483.6 536.2 L485.7 535.6 L487.9 534.9 L490.0 535.0 L492.1 535.0 L494.3 535.0 L496.4 535.0 L498.6 536.3 L500.7 536.0 L502.9 537.3 L505.0 537.0 L507.1 535.8 L509.3 537.2 L511.4 536.5 L513.6 536.7 L515.7 536.4 L517.9 536.1 L520.0 535.0 L522.0 534.3 L524.0 532.4 L526.0 533.0 L528.0 531.0 L530.0 530.4 L532.0 530.0 L534.2 531.0 L536.3 531.4 L538.5 531.8 L540.7 533.5 L542.8 533.6 L545.0 534.0 L547.1 533.3 L549.3 532.6 L551.4 533.4 L553.6 532.2 L555.7 532.4 L557.9 531.1 L560.0 531.0 L562.0 529.8 L564.0 529.9 L566.0 529.8 L568.0 527.9 L570.0 528.0 L572.0 530.0 L574.0 531.6 L576.0 532.8 L578.0 534.2 L580.0 535.0 L582.0 534.1 L584.0 535.5 L586.0 536.0 L588.0 534.5 L590.0 535.5 L592.0 534.8 L594.0 534.5 L596.0 534.8 L598.0 534.3 L600.0 534.2 L602.0 534.6 L604.0 532.8 L606.0 532.6 L608.0 532.5 L610.0 533.0 L612.1 532.1 L614.2 531.8 L616.2 533.4 L618.3 533.0 L620.4 531.3 L622.5 532.0 L624.6 531.5 L626.7 531.3 L628.8 531.2 L630.8 531.6 L632.9 531.3 L635.0 531.0 L637.0 531.9 L639.0 532.8 L641.0 534.3 L643.0 535.0 L645.0 537.0 L647.1 536.8 L649.3 536.9 L651.4 535.9 L653.6 535.0 L655.7 534.9 L657.9 535.0 L660.0 535.0 L662.0 535.0 L664.0 535.2 L666.0 534.2 L668.0 534.8 L670.0 534.2 L672.0 533.7 L674.0 533.3 L676.0 533.4 L678.0 533.6 L680.0 533.0 L682.0 532.6 L684.0 533.0 L686.0 532.3 L688.0 531.7 L690.0 532.0 L692.0 532.6 L694.0 533.4 L696.0 532.6 L698.0 533.8 L700.0 534.4 L702.0 535.8 L704.0 536.4 L706.0 535.7 L708.0 537.3 L710.0 537.0 L712.0 536.4 L714.0 534.1 L716.0 533.3 L718.0 531.4 L720.0 531.0 L722.0 533.4 L724.0 534.9 L726.0 537.2 L728.0 538.8 L730.0 540.0 L732.0 538.7 L734.0 537.3 L736.0 535.3 L738.0 532.8 L740.0 532.0 L742.0 532.5 L744.0 531.6 L746.0 532.2 L748.0 533.7 L750.0 532.6 L752.0 533.0 L754.0 533.3 L756.0 535.2 L758.0 534.1 L760.0 535.0 L762.2 533.5 L764.3 534.5 L766.5 532.5 L768.7 533.4 L770.8 532.4 L773.0 531.5 L775.0 532.9 L777.0 533.8 L779.0 533.8 L781.0 534.9 L783.0 535.0 L785.2 533.1 L787.5 533.5 L789.8 532.0 L792.0 531.0 L794.2 531.6 L796.4 530.6 L798.6 532.1 L800.8 532.7 L803.0 532.0 L805.0 530.7 L807.0 530.8 L809.0 530.9 L811.0 531.0 L813.0 529.4 L815.0 529.5 L817.0 529.6 L819.0 530.4 L821.0 531.8 L823.0 532.8 L825.0 533.0 L827.1 533.2 L829.3 533.6 L831.4 534.1 L833.6 534.4 L835.7 535.0 L837.9 534.7 L840.0 536.0 L842.0 534.8 L844.0 534.4 L846.0 532.1 L848.0 531.0 L850.0 531.8 L852.0 531.0 L854.0 532.4 L856.0 532.8 L858.0 533.0 L860.0 533.0 L862.0 533.8 L864.0 534.5 L866.0 535.5 L868.0 536.0 L870.0 536.5 L872.0 534.6 L874.0 534.2 L876.0 535.2 L878.0 535.2 L880.0 534.0 L882.0 533.6 L884.0 533.1 L886.0 533.2 L888.0 531.8 L890.0 532.0 L892.0 531.8 L894.0 532.0 L896.0 533.1 L898.0 532.8 L900.0 533.5 L902.0 534.1 L904.0 536.1 L906.0 537.7 L908.0 537.5 L910.0 539.0 L912.3 537.1 L914.7 534.2 L917.0 532.0 L919.0 533.5 L921.0 533.7 L923.0 533.8 L925.0 535.0 L927.0 533.2 L929.0 531.6 L931.0 531.4 L933.0 530.0 L935.0 529.0 L937.3 528.0 L939.7 528.1 L942.0 528.0 L944.0 531.6 L946.0 536.5 L948.0 540.0 L950.1 539.3 L952.2 541.0 L954.4 540.0 L956.5 540.2 L958.6 539.9 L960.8 540.7 L962.9 540.6 L965.0 540.0 L967.0 539.3 L969.0 538.4 L971.0 538.0 L973.0 537.5 L975.0 536.0 L977.0 535.2 L979.0 535.3 L981.0 535.1 L983.0 533.5 L985.0 533.0 L987.1 532.9 L989.3 533.3 L991.4 534.7 L993.6 535.1 L995.7 536.1 L997.9 536.3 L1000.0 536.0 L1002.0 533.9 L1004.0 532.2 L1006.0 530.7 L1008.0 529.0 L1010.0 528.0 L1012.0 529.0 L1014.0 529.9 L1016.0 530.6 L1018.0 529.9 L1020.0 531.0 L1022.0 531.8 L1024.0 530.8 L1026.0 531.1 L1028.0 531.9 L1030.0 531.5 L1032.0 531.2 L1034.0 531.7 L1036.0 533.7 L1038.0 533.1 L1040.0 534.0 L1042.0 534.7 L1044.0 536.2 L1046.0 537.4 L1048.0 538.0 L1050.0 536.3 L1052.0 536.3 L1054.0 535.9 L1056.0 535.3 L1058.0 534.1 L1060.0 534.0 L1062.2 534.0 L1064.3 534.6 L1066.5 533.3 L1068.7 533.4 L1070.8 532.4 L1073.0 533.0 L1075.5 530.3 L1078.0 528.5 L1080.0 528.5 L1082.0 527.1 L1084.0 528.4 L1086.0 528.1 L1088.0 527.0 L1090.0 527.0 L1092.0 529.5 L1094.0 529.1 L1096.0 530.7 L1098.0 531.5 L1100.0 531.8 L1102.1 531.5 L1104.2 532.5 L1106.4 532.6 L1108.5 533.0 L1110.6 532.1 L1112.8 533.2 L1114.9 533.8 L1117.0 533.0 L1119.0 532.8 L1121.0 532.1 L1123.0 530.7 L1125.0 531.0 L1127.0 532.5 L1129.0 533.7 L1131.0 535.9 L1133.0 537.0 L1135.1 536.6 L1137.2 535.6 L1139.4 534.1 L1141.5 534.3 L1143.6 533.5 L1145.8 531.9 L1147.9 532.5 L1150.0 531.0 L1152.1 531.6 L1154.2 530.7 L1156.4 532.6 L1158.5 531.3 L1160.6 531.9 L1162.8 532.9 L1164.9 532.9 L1167.0 533.0 L1169.0 532.9 L1171.0 532.8 L1173.0 532.2 L1175.0 531.6 L1177.0 531.1 L1179.0 530.6 L1181.0 531.7 L1183.0 531.0 L1185.1 532.0 L1187.2 532.1 L1189.4 533.0 L1191.5 532.7 L1193.6 533.0 L1195.8 533.8 L1197.9 535.2 L1200.0 535.0 L1202.0 533.1 L1204.0 533.0 L1206.0 531.5 L1208.0 531.5 L1210.0 530.0 L1212.1 530.0 L1214.3 530.2 L1216.4 530.7 L1218.6 531.2 L1220.7 532.0 L1222.9 531.4 L1225.0 532.0 L1227.1 532.8 L1229.3 531.5 L1231.4 532.0 L1233.6 531.8 L1235.7 531.9 L1237.9 533.4 L1240.0 533.0 L1242.0 533.9 L1244.0 533.2 L1246.0 533.6 L1248.0 534.4 L1250.0 535.0 L1252.0 535.0 L1254.0 534.6 L1256.0 534.0 L1258.0 533.2 L1260.0 531.8 L1262.0 532.0 L1264.0 531.1 L1266.0 530.1 L1268.0 530.0 L1270.0 531.6 L1272.0 533.1 L1274.0 533.9 L1276.0 535.5 L1278.0 538.1 L1280.0 539.0 L1282.0 538.3 L1284.0 540.1 L1286.0 540.4 L1288.0 540.8 L1290.0 539.9 L1292.0 540.4 L1294.0 540.7 L1296.0 541.0 L1298.0 541.0 L1300.2 540.0 L1302.5 537.4 L1304.8 534.6 L1307.0 533.0" fill="none" stroke="#fff" stroke-width="1.2" transform="translate(0,-1.1)" opacity="0.85"/>
<path d="M0.0 536.7 L2.5 533.7 L5.0 531.7 L7.1 531.9 L9.2 531.7 L11.2 532.2 L13.3 532.4 L15.4 531.4 L17.5 531.4 L19.6 533.1 L21.7 532.1 L23.8 532.1 L25.8 533.8 L27.9 532.8 L30.0 533.0 L32.0 533.5 L34.0 532.6 L36.0 532.8 L38.0 531.6 L40.0 532.4 L42.0 532.7 L44.0 531.9 L46.0 532.1 L48.0 531.8 L50.0 530.4 L52.0 531.7 L54.0 531.2 L56.0 530.4 L58.0 529.7 L60.0 531.2 L62.0 530.3 L64.0 530.8 L66.0 531.8 L68.0 532.7 L70.0 532.9 L72.0 533.0 L74.0 533.5 L76.0 532.1 L78.0 532.6 L80.0 531.6 L82.0 532.2 L84.0 531.8 L86.0 529.9 L88.0 529.6 L90.0 530.0 L92.0 530.4 L94.0 532.9 L96.0 532.9 L98.0 534.3 L100.0 535.0 L102.2 533.4 L104.3 532.5 L106.5 531.0 L108.7 529.7 L110.8 528.9 L113.0 527.5 L115.1 529.0 L117.2 530.9 L119.4 531.8 L121.5 533.6 L123.6 534.8 L125.8 536.4 L127.9 537.0 L130.0 538.0 L132.0 536.7 L134.0 537.5 L136.0 537.1 L138.0 536.4 L140.0 535.0 L142.0 534.7 L144.0 534.5 L146.0 533.1 L148.0 533.9 L150.0 532.9 L152.0 531.9 L154.0 531.0 L156.0 532.1 L158.0 531.9 L160.0 530.5 L162.0 530.2 L164.0 532.2 L166.0 532.0 L168.0 532.0 L170.0 532.8 L172.0 534.3 L174.0 535.1 L176.0 534.0 L178.0 535.7 L180.0 536.0 L182.3 536.1 L184.7 538.4 L187.0 539.0 L189.2 537.5 L191.3 537.4 L193.5 536.5 L195.7 534.3 L197.8 534.2 L200.0 532.0 L202.3 533.3 L204.7 534.5 L207.0 537.0 L209.2 536.3 L211.3 534.3 L213.5 533.7 L215.7 533.3 L217.8 532.8 L220.0 531.7 L222.0 531.3 L224.0 531.4 L226.0 533.4 L228.0 533.0 L230.1 532.4 L232.3 533.5 L234.4 533.2 L236.6 531.9 L238.7 531.8 L240.9 531.8 L243.0 531.5 L245.0 531.7 L247.0 531.6 L249.0 531.5 L251.0 531.6 L253.0 532.2 L255.0 531.2 L257.0 531.0 L259.0 531.6 L261.0 530.6 L263.0 530.6 L265.0 531.0 L267.0 532.8 L269.0 532.6 L271.0 533.5 L273.0 533.2 L275.0 535.0 L277.0 534.2 L279.0 534.0 L281.0 532.2 L283.0 532.8 L285.0 532.0 L287.0 532.5 L289.0 531.5 L291.0 532.9 L293.0 532.7 L295.0 533.0 L297.2 534.1 L299.5 534.2 L301.8 535.7 L304.0 536.0 L306.0 535.7 L308.0 533.5 L310.0 532.9 L312.0 533.4 L314.0 533.2 L316.0 531.0 L318.0 530.7 L320.0 530.0 L322.0 529.4 L324.0 528.0 L326.0 527.5 L328.0 527.9 L330.0 528.4 L332.0 529.2 L334.0 530.3 L336.0 530.3 L338.0 531.1 L340.0 532.0 L342.0 532.3 L344.0 530.7 L346.0 531.5 L348.0 531.7 L350.0 531.0 L352.0 531.2 L354.0 531.6 L356.0 533.4 L358.0 532.9 L360.0 534.0 L362.0 534.2 L364.0 535.5 L366.0 536.9 L368.0 536.5 L370.0 537.8 L372.0 539.0 L374.2 538.8 L376.3 540.0 L378.5 539.4 L380.7 540.4 L382.8 539.2 L385.0 540.0 L387.2 536.7 L389.5 534.3 L391.8 531.8 L394.0 528.0 L396.2 529.7 L398.4 531.1 L400.6 532.6 L402.8 535.3 L405.0 537.0 L407.1 535.8 L409.3 536.5 L411.4 536.0 L413.6 534.1 L415.7 533.7 L417.9 534.2 L420.0 533.0 L422.0 534.0 L424.0 535.1 L426.0 534.9 L428.0 536.0 L430.0 534.6 L432.0 534.3 L434.0 534.6 L436.0 532.9 L438.0 532.4 L440.0 532.0 L442.0 532.6 L444.0 533.3 L446.0 534.1 L448.0 535.0 L450.2 535.3 L452.5 533.3 L454.8 532.5 L457.0 533.0 L459.2 533.3 L461.5 532.5 L463.8 532.1 L466.0 530.5 L468.2 532.0 L470.5 534.7 L472.8 536.2 L475.0 537.0 L477.1 536.2 L479.3 536.9 L481.4 536.8 L483.6 536.2 L485.7 535.6 L487.9 534.9 L490.0 535.0 L492.1 535.0 L494.3 535.0 L496.4 535.0 L498.6 536.3 L500.7 536.0 L502.9 537.3 L505.0 537.0 L507.1 535.8 L509.3 537.2 L511.4 536.5 L513.6 536.7 L515.7 536.4 L517.9 536.1 L520.0 535.0 L522.0 534.3 L524.0 532.4 L526.0 533.0 L528.0 531.0 L530.0 530.4 L532.0 530.0 L534.2 531.0 L536.3 531.4 L538.5 531.8 L540.7 533.5 L542.8 533.6 L545.0 534.0 L547.1 533.3 L549.3 532.6 L551.4 533.4 L553.6 532.2 L555.7 532.4 L557.9 531.1 L560.0 531.0 L562.0 529.8 L564.0 529.9 L566.0 529.8 L568.0 527.9 L570.0 528.0 L572.0 530.0 L574.0 531.6 L576.0 532.8 L578.0 534.2 L580.0 535.0 L582.0 534.1 L584.0 535.5 L586.0 536.0 L588.0 534.5 L590.0 535.5 L592.0 534.8 L594.0 534.5 L596.0 534.8 L598.0 534.3 L600.0 534.2 L602.0 534.6 L604.0 532.8 L606.0 532.6 L608.0 532.5 L610.0 533.0 L612.1 532.1 L614.2 531.8 L616.2 533.4 L618.3 533.0 L620.4 531.3 L622.5 532.0 L624.6 531.5 L626.7 531.3 L628.8 531.2 L630.8 531.6 L632.9 531.3 L635.0 531.0 L637.0 531.9 L639.0 532.8 L641.0 534.3 L643.0 535.0 L645.0 537.0 L647.1 536.8 L649.3 536.9 L651.4 535.9 L653.6 535.0 L655.7 534.9 L657.9 535.0 L660.0 535.0 L662.0 535.0 L664.0 535.2 L666.0 534.2 L668.0 534.8 L670.0 534.2 L672.0 533.7 L674.0 533.3 L676.0 533.4 L678.0 533.6 L680.0 533.0 L682.0 532.6 L684.0 533.0 L686.0 532.3 L688.0 531.7 L690.0 532.0 L692.0 532.6 L694.0 533.4 L696.0 532.6 L698.0 533.8 L700.0 534.4 L702.0 535.8 L704.0 536.4 L706.0 535.7 L708.0 537.3 L710.0 537.0 L712.0 536.4 L714.0 534.1 L716.0 533.3 L718.0 531.4 L720.0 531.0 L722.0 533.4 L724.0 534.9 L726.0 537.2 L728.0 538.8 L730.0 540.0 L732.0 538.7 L734.0 537.3 L736.0 535.3 L738.0 532.8 L740.0 532.0 L742.0 532.5 L744.0 531.6 L746.0 532.2 L748.0 533.7 L750.0 532.6 L752.0 533.0 L754.0 533.3 L756.0 535.2 L758.0 534.1 L760.0 535.0 L762.2 533.5 L764.3 534.5 L766.5 532.5 L768.7 533.4 L770.8 532.4 L773.0 531.5 L775.0 532.9 L777.0 533.8 L779.0 533.8 L781.0 534.9 L783.0 535.0 L785.2 533.1 L787.5 533.5 L789.8 532.0 L792.0 531.0 L794.2 531.6 L796.4 530.6 L798.6 532.1 L800.8 532.7 L803.0 532.0 L805.0 530.7 L807.0 530.8 L809.0 530.9 L811.0 531.0 L813.0 529.4 L815.0 529.5 L817.0 529.6 L819.0 530.4 L821.0 531.8 L823.0 532.8 L825.0 533.0 L827.1 533.2 L829.3 533.6 L831.4 534.1 L833.6 534.4 L835.7 535.0 L837.9 534.7 L840.0 536.0 L842.0 534.8 L844.0 534.4 L846.0 532.1 L848.0 531.0 L850.0 531.8 L852.0 531.0 L854.0 532.4 L856.0 532.8 L858.0 533.0 L860.0 533.0 L862.0 533.8 L864.0 534.5 L866.0 535.5 L868.0 536.0 L870.0 536.5 L872.0 534.6 L874.0 534.2 L876.0 535.2 L878.0 535.2 L880.0 534.0 L882.0 533.6 L884.0 533.1 L886.0 533.2 L888.0 531.8 L890.0 532.0 L892.0 531.8 L894.0 532.0 L896.0 533.1 L898.0 532.8 L900.0 533.5 L902.0 534.1 L904.0 536.1 L906.0 537.7 L908.0 537.5 L910.0 539.0 L912.3 537.1 L914.7 534.2 L917.0 532.0 L919.0 533.5 L921.0 533.7 L923.0 533.8 L925.0 535.0 L927.0 533.2 L929.0 531.6 L931.0 531.4 L933.0 530.0 L935.0 529.0 L937.3 528.0 L939.7 528.1 L942.0 528.0 L944.0 531.6 L946.0 536.5 L948.0 540.0 L950.1 539.3 L952.2 541.0 L954.4 540.0 L956.5 540.2 L958.6 539.9 L960.8 540.7 L962.9 540.6 L965.0 540.0 L967.0 539.3 L969.0 538.4 L971.0 538.0 L973.0 537.5 L975.0 536.0 L977.0 535.2 L979.0 535.3 L981.0 535.1 L983.0 533.5 L985.0 533.0 L987.1 532.9 L989.3 533.3 L991.4 534.7 L993.6 535.1 L995.7 536.1 L997.9 536.3 L1000.0 536.0 L1002.0 533.9 L1004.0 532.2 L1006.0 530.7 L1008.0 529.0 L1010.0 528.0 L1012.0 529.0 L1014.0 529.9 L1016.0 530.6 L1018.0 529.9 L1020.0 531.0 L1022.0 531.8 L1024.0 530.8 L1026.0 531.1 L1028.0 531.9 L1030.0 531.5 L1032.0 531.2 L1034.0 531.7 L1036.0 533.7 L1038.0 533.1 L1040.0 534.0 L1042.0 534.7 L1044.0 536.2 L1046.0 537.4 L1048.0 538.0 L1050.0 536.3 L1052.0 536.3 L1054.0 535.9 L1056.0 535.3 L1058.0 534.1 L1060.0 534.0 L1062.2 534.0 L1064.3 534.6 L1066.5 533.3 L1068.7 533.4 L1070.8 532.4 L1073.0 533.0 L1075.5 530.3 L1078.0 528.5 L1080.0 528.5 L1082.0 527.1 L1084.0 528.4 L1086.0 528.1 L1088.0 527.0 L1090.0 527.0 L1092.0 529.5 L1094.0 529.1 L1096.0 530.7 L1098.0 531.5 L1100.0 531.8 L1102.1 531.5 L1104.2 532.5 L1106.4 532.6 L1108.5 533.0 L1110.6 532.1 L1112.8 533.2 L1114.9 533.8 L1117.0 533.0 L1119.0 532.8 L1121.0 532.1 L1123.0 530.7 L1125.0 531.0 L1127.0 532.5 L1129.0 533.7 L1131.0 535.9 L1133.0 537.0 L1135.1 536.6 L1137.2 535.6 L1139.4 534.1 L1141.5 534.3 L1143.6 533.5 L1145.8 531.9 L1147.9 532.5 L1150.0 531.0 L1152.1 531.6 L1154.2 530.7 L1156.4 532.6 L1158.5 531.3 L1160.6 531.9 L1162.8 532.9 L1164.9 532.9 L1167.0 533.0 L1169.0 532.9 L1171.0 532.8 L1173.0 532.2 L1175.0 531.6 L1177.0 531.1 L1179.0 530.6 L1181.0 531.7 L1183.0 531.0 L1185.1 532.0 L1187.2 532.1 L1189.4 533.0 L1191.5 532.7 L1193.6 533.0 L1195.8 533.8 L1197.9 535.2 L1200.0 535.0 L1202.0 533.1 L1204.0 533.0 L1206.0 531.5 L1208.0 531.5 L1210.0 530.0 L1212.1 530.0 L1214.3 530.2 L1216.4 530.7 L1218.6 531.2 L1220.7 532.0 L1222.9 531.4 L1225.0 532.0 L1227.1 532.8 L1229.3 531.5 L1231.4 532.0 L1233.6 531.8 L1235.7 531.9 L1237.9 533.4 L1240.0 533.0 L1242.0 533.9 L1244.0 533.2 L1246.0 533.6 L1248.0 534.4 L1250.0 535.0 L1252.0 535.0 L1254.0 534.6 L1256.0 534.0 L1258.0 533.2 L1260.0 531.8 L1262.0 532.0 L1264.0 531.1 L1266.0 530.1 L1268.0 530.0 L1270.0 531.6 L1272.0 533.1 L1274.0 533.9 L1276.0 535.5 L1278.0 538.1 L1280.0 539.0 L1282.0 538.3 L1284.0 540.1 L1286.0 540.4 L1288.0 540.8 L1290.0 539.9 L1292.0 540.4 L1294.0 540.7 L1296.0 541.0 L1298.0 541.0 L1300.2 540.0 L1302.5 537.4 L1304.8 534.6 L1307.0 533.0" fill="none" stroke="#000" stroke-width="1.1"/>
</svg>
</body></html>
